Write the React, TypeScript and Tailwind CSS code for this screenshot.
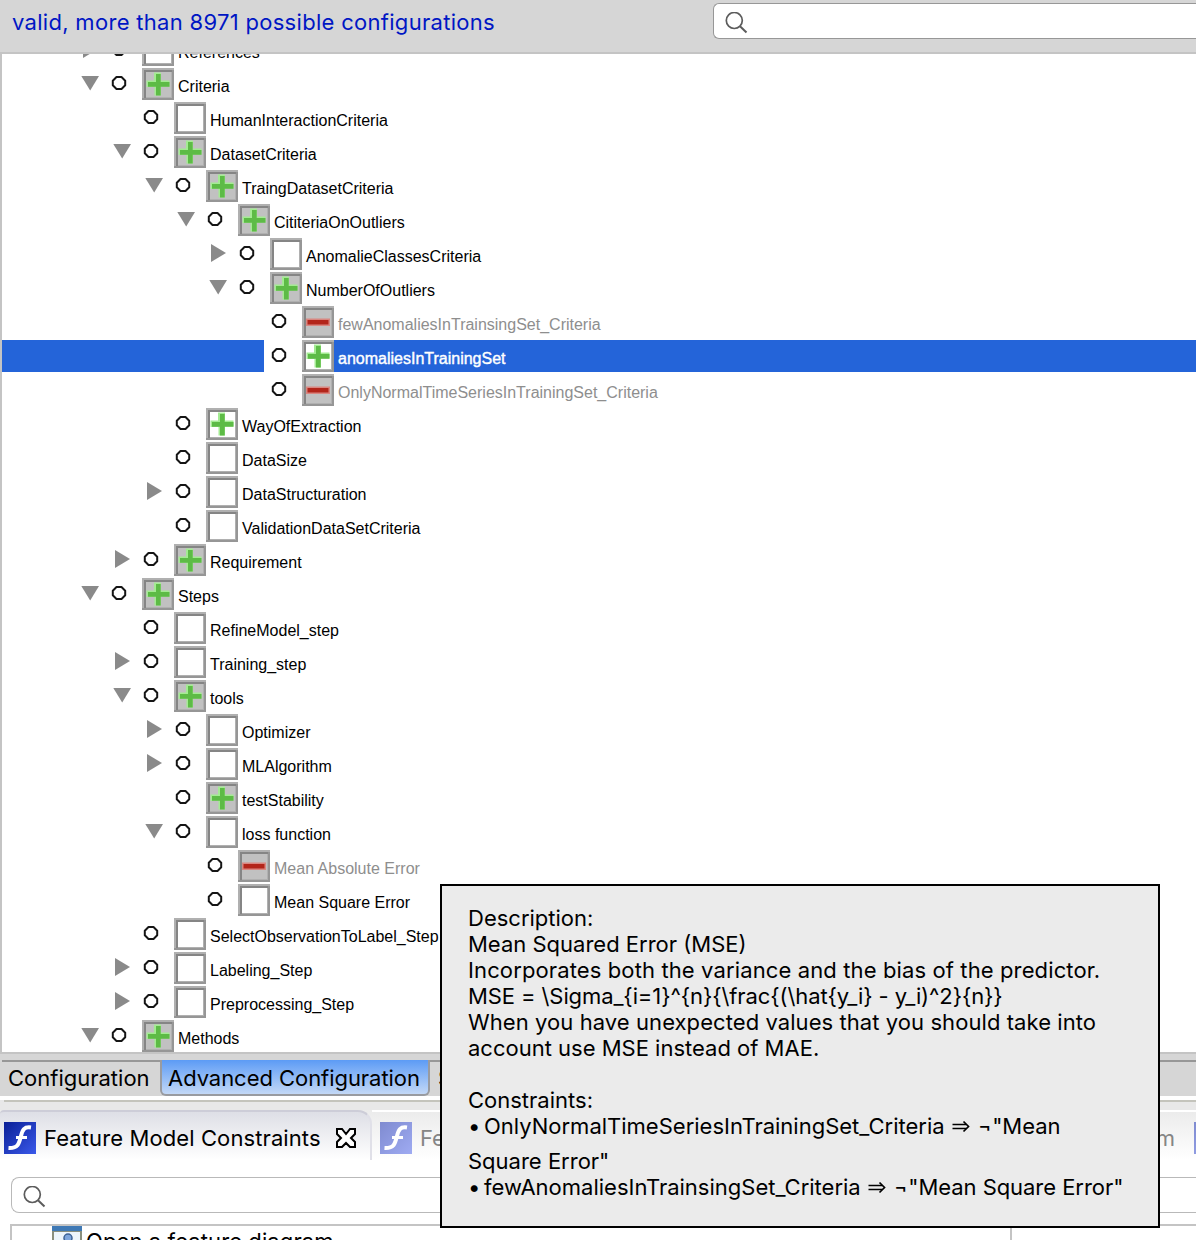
type Box = 'plus' | 'plusWhite' | 'minus' | 'empty';
type Row = { depth: number; label: string; box: Box; open?: boolean; selected?: boolean };

const rows: Row[] = [
  { depth: 0, label: 'References', box: 'empty', open: false },
  { depth: 0, label: 'Criteria', box: 'plus', open: true },
  { depth: 1, label: 'HumanInteractionCriteria', box: 'empty' },
  { depth: 1, label: 'DatasetCriteria', box: 'plus', open: true },
  { depth: 2, label: 'TraingDatasetCriteria', box: 'plus', open: true },
  { depth: 3, label: 'CititeriaOnOutliers', box: 'plus', open: true },
  { depth: 4, label: 'AnomalieClassesCriteria', box: 'empty', open: false },
  { depth: 4, label: 'NumberOfOutliers', box: 'plus', open: true },
  { depth: 5, label: 'fewAnomaliesInTrainsingSet_Criteria', box: 'minus' },
  { depth: 5, label: 'anomaliesInTrainingSet', box: 'plusWhite', selected: true },
  { depth: 5, label: 'OnlyNormalTimeSeriesInTrainingSet_Criteria', box: 'minus' },
  { depth: 2, label: 'WayOfExtraction', box: 'plusWhite' },
  { depth: 2, label: 'DataSize', box: 'empty' },
  { depth: 2, label: 'DataStructuration', box: 'empty', open: false },
  { depth: 2, label: 'ValidationDataSetCriteria', box: 'empty' },
  { depth: 1, label: 'Requirement', box: 'plus', open: false },
  { depth: 0, label: 'Steps', box: 'plus', open: true },
  { depth: 1, label: 'RefineModel_step', box: 'empty' },
  { depth: 1, label: 'Training_step', box: 'empty', open: false },
  { depth: 1, label: 'tools', box: 'plus', open: true },
  { depth: 2, label: 'Optimizer', box: 'empty', open: false },
  { depth: 2, label: 'MLAlgorithm', box: 'empty', open: false },
  { depth: 2, label: 'testStability', box: 'plus' },
  { depth: 2, label: 'loss function', box: 'empty', open: true },
  { depth: 3, label: 'Mean Absolute Error', box: 'minus' },
  { depth: 3, label: 'Mean Square Error', box: 'empty' },
  { depth: 1, label: 'SelectObservationToLabel_Step', box: 'empty' },
  { depth: 1, label: 'Labeling_Step', box: 'empty', open: false },
  { depth: 1, label: 'Preprocessing_Step', box: 'empty', open: false },
  { depth: 0, label: 'Methods', box: 'plus', open: true },
];

const indents = ['w-[78px]', 'w-[110px]', 'w-[142px]', 'w-[174px]', 'w-[206px]', 'w-[238px]'];

function StateBox({ kind }: { kind: Box }) {
  const fill = kind === 'plus' || kind === 'minus' ? '#c1c1c1' : '#ffffff';
  return (
    <svg className="h-8 w-8 shrink-0" viewBox="0 0 32 32">
      <rect width="32" height="32" fill="#b0b0b0" />
      <path d="M2 2H30V4H4V30H2Z" fill="#858585" />
      <path d="M30 2H32V32H0V30H30Z" fill="#969696" />
      <rect x="4" y="4" width="25" height="25" fill={fill} />
      {(kind === 'plus' || kind === 'plusWhite') && (
        <>
          <path d="M12 4.500H19V12.500H27.500V18.500H19V27.500H12.500V19H4.500V12.500H12Z" fill="#a3eb92" />
          <path d="M14 6H18.700V14H27.500V18.700H18.700V27.500H14V18.700H6V14H14Z" fill="#5dbb46" />
        </>
      )}
      {kind === 'minus' && (
        <>
          <rect x="4" y="12.500" width="24" height="7.500" fill="#d98680" />
          <rect x="5.500" y="14" width="21" height="4.500" fill="#b3251a" />
        </>
      )}
    </svg>
  );
}

function TreeRow({ row }: { row: Row }) {
  const color = row.selected
    ? 'grow bg-[#2464d9] text-white [-webkit-text-stroke:0.4px_white]'
    : row.box === 'minus'
      ? 'text-[#8e8e8e]'
      : 'text-black';
  return (
    <div className="flex h-[34px] shrink-0 items-start">
      {row.selected ? (
        <div className="h-8 w-[262px] shrink-0 bg-[#2464d9]" />
      ) : (
        <>
          <div className={`${indents[row.depth]} h-8 shrink-0`} />
          <svg className="h-8 w-6 shrink-0" viewBox="0 0 24 32">
            {row.open === true && <path d="M1.300 8H19L10.200 22.500Z" fill="#8a8a8a" />}
            {row.open === false && <path d="M3 6V24L18 15Z" fill="#8a8a8a" />}
          </svg>
        </>
      )}
      <svg className="h-8 w-[38px] shrink-0" viewBox="0 0 38 32">
        <path
          d="M12.500 9H17.500L21.200 12.700V17.300L17.500 21H12.500L8.800 17.300V12.700Z"
          fill="white"
          stroke="#151515"
          strokeWidth="2"
          strokeLinejoin="round"
        />
      </svg>
      <StateBox kind={row.box} />
      <span className={`flex h-8 items-center whitespace-pre pl-1 pt-1.5 text-base ${color}`}>{row.label}</span>
    </div>
  );
}

function SearchGlyph() {
  return (
    <svg className="h-6 w-6" viewBox="0 0 24 24" fill="none" stroke="#5c5c5c" strokeWidth="1.7">
      <circle cx="9.300" cy="8.500" r="8" />
      <path d="M15 14.300L21.500 20.500" strokeWidth="2" />
    </svg>
  );
}

function FeatureIcon({ faded = false }: { faded?: boolean }) {
  const id = faded ? 'ideFaded' : 'ide';
  return (
    <svg className="h-8 w-8 shrink-0" viewBox="0 0 32 32">
      <defs>
        <linearGradient id={id} x1="0" y1="0" x2="1" y2="1">
          <stop offset="0" stopColor={faded ? '#7f8bd0' : '#0a1f96'} />
          <stop offset="1" stopColor={faded ? '#9fabf2' : '#3a59ea'} />
        </linearGradient>
      </defs>
      <rect width="32" height="32" fill={`url(#${id})`} />
      <path
        d="M27 5.500C20 4.500 18.500 8 17 14C15 22 14 26.500 4.500 26"
        fill="none"
        stroke="white"
        strokeWidth="4"
      />
      <path d="M12 15.500H23" stroke="white" strokeWidth="3" />
    </svg>
  );
}

function Implies() {
  return (
    <svg className="ml-[7px] mr-2 inline-block h-4 w-[18px] align-[-3px]" viewBox="0 0 18 16" fill="none" stroke="black">
      <path d="M0.500 6.500H14M0.500 10.500H14" strokeWidth="1.500" />
      <path d="M11.500 3.500L16.500 8.500L11.500 13.500" strokeWidth="1.700" />
    </svg>
  );
}

export default function App() {
  return (
    <div className="relative flex h-[1240px] w-[1196px] flex-col overflow-hidden bg-white font-['Inter',sans-serif] text-[22px] text-black">
      <header className="flex h-[54px] shrink-0 justify-between border-b-2 border-[#c4c4c4] bg-[#d6d6d6]">
        <div className="whitespace-pre pl-3 pt-[7px] leading-[30px] tracking-[0.3px] text-[#0016c4]">
          valid, more than 8971 possible configurations
        </div>
        <div className="mt-[3px] flex h-9 w-[483px] rounded-l-md border border-r-0 border-[#979797] bg-white pl-[11px] pt-2">
          <SearchGlyph />
        </div>
      </header>

      <main className="flex h-[998px] shrink-0 flex-col overflow-hidden border-l-2 border-[#c4c4c4] font-['Liberation_Sans',Arial,sans-serif]">
        <div className="-mt-5 flex flex-col">
          {rows.map((row) => (
            <TreeRow key={row.label} row={row} />
          ))}
        </div>
      </main>

      <div className="flex h-11 shrink-0 flex-col border-t-2 border-[#c4c4c4] bg-[#d6d6d6]">
        <div className="ml-0.5 h-2 shrink-0 border-b-2 border-[#979797]" />
        <div className="-mt-0.5 flex h-9 shrink-0">
          <div className="w-[160px] whitespace-pre pl-2 leading-[37px]">Configuration</div>
          <div className="h-[36px] w-[270px] rounded-b-md border-2 border-t-0 border-[#999ba0] bg-linear-to-b from-[#5c9bf5] to-[#c3d8f6] pl-1.5">
            <div className="whitespace-pre leading-[37px] tracking-[-0.05px]">Advanced Configuration</div>
          </div>
          <div className="pl-2 leading-[37px]">S</div>
        </div>
      </div>
      <div className="h-3.5 shrink-0 border-t-4 border-white bg-[#e8e8e8]">
        <div className="ml-1 h-0.5 bg-[#c4c4bc]" />
      </div>

      <div className="flex h-[50px] shrink-0 bg-linear-to-b from-[#ebebeb] to-white">
        <div className="flex w-[372px] shrink-0 rounded-tl-sm rounded-tr-[14px] border-r-2 border-t-2 border-r-[#e0e0e8] border-t-[#cdcdd8] bg-linear-to-b from-[#dedfe6] to-white pl-1 pt-[10px]">
          <FeatureIcon />
          <span className="w-[299px] shrink-0 whitespace-pre pl-2 leading-8 tracking-[0.1px]">
            Feature Model Constraints
          </span>
          <svg className="mt-[5px] h-6 w-6 shrink-0" viewBox="0 0 24 24">
            <path
              d="M2 2H7L11 7L15 2H20V7L16 11L20 15V20H15L11 16L7 20H2V15L6 11L2 7Z"
              fill="white"
              stroke="black"
              strokeWidth="2"
            />
          </svg>
        </div>
        <div className="flex grow border-t-2 border-white pl-2 pt-[10px] text-[#858585]">
          <FeatureIcon faded />
          <span className="flex w-[763px] shrink-0 justify-between pl-2 leading-8">
            <span>Fe</span>
            <span>m</span>
          </span>
          <span className="w-[19px] shrink-0" />
          <FeatureIcon faded />
        </div>
      </div>

      <div className="ml-[11px] mt-[17px] flex h-9 shrink-0 rounded-l-lg border border-r-0 border-[#b9b9b9] pl-[11px] pt-2">
        <SearchGlyph />
      </div>
      <div className="ml-2.5 mt-[11px] flex h-10 shrink-0">
        <div className="flex w-[1002px] shrink-0 border-2 border-[#c4c4c4] pl-10">
          <svg className="h-8 w-[30px]" viewBox="0 0 30 32">
            <rect width="30" height="32" fill="#8a8f7e" />
            <rect width="30" height="5" fill="#3f79b5" />
            <rect x="2" y="6" width="26" height="26" fill="#edf5fc" />
            <circle cx="16" cy="12" r="4" fill="#7ea5dc" stroke="#3d6296" strokeWidth="1.500" />
          </svg>
          <span className="whitespace-pre pl-1 leading-[30px] tracking-[0.1px]">Open a feature diagram</span>
        </div>
        <div className="grow border-t-2 border-[#c4c4c4]" />
      </div>

      <aside className="absolute left-[440px] top-[884px] h-[344px] w-[720px] whitespace-pre border-2 border-black bg-[#ebebeb] pl-[26px] pt-[19px] leading-[26px]">
        <div>Description:</div>
        <div>Mean Squared Error (MSE)</div>
        <div className="tracking-[0.12px]">Incorporates both the variance and the bias of the predictor.</div>
        <div className="tracking-[-0.1px]">{'MSE = \\Sigma_{i=1}^{n}{\\frac{(\\hat{y_i} - y_i)^2}{n}}'}</div>
        <div className="tracking-[0.07px]">When you have unexpected values that you should take into</div>
        <div>account use MSE instead of MAE.</div>
        <div className="pt-[26px]">Constraints:</div>
        <div className="flex h-[26px] items-center">
          <span className="w-4">•</span>
          <span>OnlyNormalTimeSeriesInTrainingSet_Criteria</span>
          <Implies />
          <span className="tracking-[-0.05px]">¬"Mean</span>
        </div>
        <div className="pt-[9px]">Square Error"</div>
        <div className="flex h-[26px] items-center">
          <span className="w-4">•</span>
          <span>fewAnomaliesInTrainsingSet_Criteria</span>
          <Implies />
          <span className="tracking-[-0.05px]">¬"Mean Square Error"</span>
        </div>
      </aside>
    </div>
  );
}
